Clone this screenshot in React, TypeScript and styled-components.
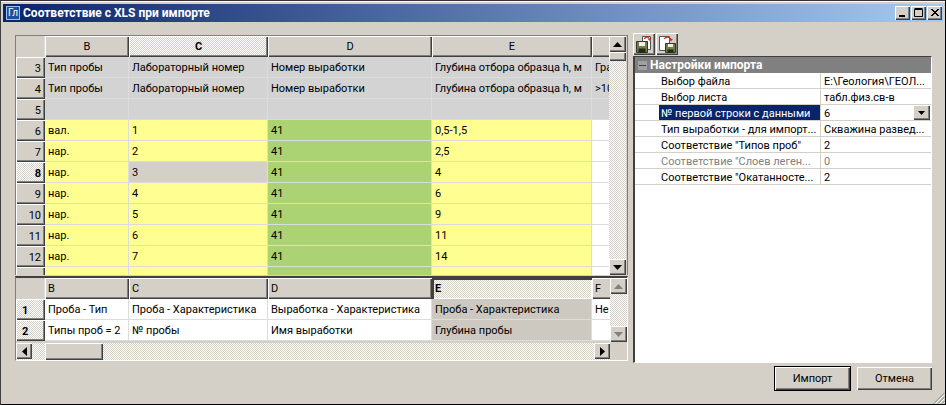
import { createGlobalStyle, styled } from 'styled-components';

const GlobalStyle = createGlobalStyle`
  html, body {
    margin: 0;
    padding: 0;
    background: #fff;
  }
  * {
    box-sizing: border-box;
  }
`;

const FACE = '#d4d0c8';
const DITHER = `repeating-conic-gradient(#ffffff 0 25%, ${FACE} 0 50%) 0 0 / 2px 2px`;
const RAISED = `inset 1px 1px 0 #fff, inset -1px -1px 0 #404040, inset -2px -2px 0 #808080`;

const topColumns = [
  { name: 'B', width: 84 },
  { name: 'C', width: 139, active: true },
  { name: 'D', width: 164 },
  { name: 'E', width: 160 },
  { name: '', width: 20 },
];

const topRows = [
  { n: '3', tone: 'head', cells: ['Тип пробы', 'Лабораторный номер', 'Номер выработки', 'Глубина отбора образца h, м', 'Гра'] },
  { n: '4', tone: 'head', cells: ['Тип пробы', 'Лабораторный номер', 'Номер выработки', 'Глубина отбора образца h, м', '>10'] },
  { n: '5', tone: 'head', cells: ['', '', '', '', ''] },
  { n: '6', tone: 'data', cells: ['вал.', '1', '41', '0,5-1,5', ''] },
  { n: '7', tone: 'data', cells: ['нар.', '2', '41', '2,5', ''] },
  { n: '8', tone: 'data', active: true, cells: ['нар.', '3', '41', '4', ''] },
  { n: '9', tone: 'data', cells: ['нар.', '4', '41', '6', ''] },
  { n: '10', tone: 'data', cells: ['нар.', '5', '41', '9', ''] },
  { n: '11', tone: 'data', cells: ['нар.', '6', '41', '11', ''] },
  { n: '12', tone: 'data', cells: ['нар.', '7', '41', '14', ''] },
  { n: '', tone: 'data', cells: ['', '', '', '', ''] },
];

const bottomRows = [
  { n: '1', cells: ['Проба - Тип', 'Проба - Характеристика', 'Выработка - Характеристика', 'Проба - Характеристика', 'Не'] },
  { n: '2', cells: ['Типы проб = 2', '№ пробы', 'Имя выработки', 'Глубина пробы', ''] },
];

const settings = [
  { label: 'Выбор файла', value: 'E:\\Геология\\ГЕОЛ...' },
  { label: 'Выбор листа', value: 'табл.физ.св-в' },
  { label: '№ первой строки с данными', value: '6', selected: true },
  { label: 'Тип выработки - для импорт...', value: 'Скважина развед...' },
  { label: 'Соответствие "Типов проб"', value: '2' },
  { label: 'Соответствие "Слоев леген...', value: '0', muted: true },
  { label: 'Соответствие "Окатанносте...', value: '2' },
];

function cellTone(tone: string, col: number, rowActive?: boolean) {
  if (tone === 'head') return '#d3d3d3';
  if (rowActive && col === 1) return FACE;
  if (col === 2) return '#acd373';
  if (col === 4) return '#ffffff';
  return '#ffff91';
}

export default function App() {
  return (
    <>
      <GlobalStyle />
      <Window>
        <TitleBar>
          <AppBadge>Гл</AppBadge>
          <TitleText>Соответствие с XLS при импорте</TitleText>
          <Caption>
            <CaptionButton aria-label="Свернуть">
              <svg width="10" height="10" viewBox="0 0 10 10"><rect x="1" y="7" width="6" height="2" fill="#000" /></svg>
            </CaptionButton>
            <CaptionButton aria-label="Развернуть">
              <svg width="10" height="10" viewBox="0 0 10 10"><path d="M0.500 1.500h8v7h-8z M0.500 0.500h8" fill="none" stroke="#000" /></svg>
            </CaptionButton>
            <CaptionButton aria-label="Закрыть">
              <svg width="10" height="10" viewBox="0 0 10 10"><path d="M1 1l7 7M2 1l7 7M8 1l-7 7M9 1l-7 7" stroke="#000" fill="none" /></svg>
            </CaptionButton>
          </Caption>
        </TitleBar>

        <Body>
          <LeftPane>
            <TopGrid>
              <GridArea>
                <Row>
                  <Corner />
                  {topColumns.map((c) => (
                    <ColumnHead key={c.name} $width={c.width} $active={c.active}>{c.name}</ColumnHead>
                  ))}
                </Row>
                {topRows.map((r, i) => (
                  <Row key={i}>
                    <RowHead $active={r.active}>{r.n}</RowHead>
                    {r.cells.map((text, col) => (
                      <Cell key={col} $width={topColumns[col].width} $bg={cellTone(r.tone, col, r.active)}>{text}</Cell>
                    ))}
                  </Row>
                ))}
              </GridArea>
              <VScroll>
                <ScrollButton><UpArrow /></ScrollButton>
                <VThumb />
                <ScrollTrack />
                <ScrollButton><DownArrow /></ScrollButton>
              </VScroll>
            </TopGrid>

            <BottomGrid>
              <GridRowStack>
                <GridArea>
                  <Row>
                    <Corner />
                    {['B', 'C', 'D', 'E', 'F'].map((name, i) => (
                      <LetterHead key={name} $width={topColumns[i].width} $active={name === 'E'}>{name}</LetterHead>
                    ))}
                  </Row>
                  {bottomRows.map((r) => (
                    <Row key={r.n}>
                      <BoldRowHead>{r.n}</BoldRowHead>
                      {r.cells.map((text, col) => (
                        <Cell key={col} $width={topColumns[col].width} $bg={col === 3 ? '#cdc9c1' : '#ffffff'}>{text}</Cell>
                      ))}
                    </Row>
                  ))}
                </GridArea>
                <HScroll>
                  <ScrollButton $wide><LeftArrow /></ScrollButton>
                  <HThumb />
                  <ScrollTrack />
                  <ScrollButton $wide><RightArrow /></ScrollButton>
                </HScroll>
              </GridRowStack>
              <DisabledScroll>
                <ScrollButton><UpArrow $muted /></ScrollButton>
                <ScrollTrack />
                <ScrollButton><DownArrow $muted /></ScrollButton>
              </DisabledScroll>
            </BottomGrid>
          </LeftPane>

          <RightPane>
            <Toolbar>
              <ToolButton aria-label="Загрузить настройки">
                <svg width="20" height="20" viewBox="0 0 20 20">
                  <path d="M8.500 2.500h8v13h-8z" fill="#fff" stroke="#555" />
                  <path d="M10 5c2-2.500 4-2.500 5.500-0.500" fill="none" stroke="#d03020" strokeWidth="1.200" />
                  <path d="M13.500 4.500h4l-2 2.500z" fill="#d03020" />
                  <path d="M2.500 7.500h11v11h-11z" fill="#6f7f45" stroke="#333" />
                  <path d="M5 8h6v4H5z" fill="#f0f0e8" />
                  <path d="M4.500 14.500h7v4h-7z" fill="#1f2a10" />
                </svg>
              </ToolButton>
              <ToolButton aria-label="Сохранить настройки">
                <svg width="20" height="20" viewBox="0 0 20 20">
                  <path d="M2.500 2.500h10v14h-10z" fill="#fff" stroke="#555" />
                  <path d="M7 5c2-2.500 5-2.500 7 0" fill="none" stroke="#d03020" strokeWidth="1.200" />
                  <path d="M12 5h4l-2 2.500z" fill="#d03020" />
                  <path d="M8.500 9.500h10v9h-10z" fill="#6f7f45" stroke="#333" />
                  <path d="M11 10h5v3h-5z" fill="#f0f0e8" />
                  <path d="M10.500 15.500h6v3h-6z" fill="#1f2a10" />
                </svg>
              </ToolButton>
            </Toolbar>
            <PropertyGrid>
              <GroupHeader>
                <Collapse>
                  <svg width="9" height="9" viewBox="0 0 9 9"><rect x="1" y="4" width="7" height="1" fill="#404040" /></svg>
                </Collapse>
                Настройки импорта
              </GroupHeader>
              {settings.map((s) => (
                <PropRow key={s.label}>
                  <PropGutter />
                  <PropLabel $selected={s.selected} $muted={s.muted}>{s.label}</PropLabel>
                  <PropValue $muted={s.muted}>
                    {s.value}
                    {s.selected && (
                      <ComboButton>
                        <svg width="7" height="4" viewBox="0 0 7 4"><path d="M0 0h7L3.500 4z" fill="#000" /></svg>
                      </ComboButton>
                    )}
                  </PropValue>
                </PropRow>
              ))}
            </PropertyGrid>
          </RightPane>
        </Body>

        <Footer>
          <DefaultButton>Импорт</DefaultButton>
          <PushButton>Отмена</PushButton>
          <Grip>
            <svg width="12" height="12" viewBox="0 0 12 12">
              <path d="M11.500 1L1 11.500M11.500 5L5 11.500M11.500 9L9 11.500" stroke="#808080" fill="none" />
              <path d="M11.500 2.500L2.500 11.500M11.500 6.500L6.500 11.500M11.500 10.500L10.500 11.500" stroke="#fff" fill="none" />
            </svg>
          </Grip>
        </Footer>
      </Window>
    </>
  );
}

const UpArrow = ({ $muted }: { $muted?: boolean }) => (
  <svg width="9" height="5" viewBox="0 0 9 5"><path d="M4.500 0L9 5H0z" fill={$muted ? '#808080' : '#000'} /></svg>
);
const DownArrow = ({ $muted }: { $muted?: boolean }) => (
  <svg width="9" height="5" viewBox="0 0 9 5"><path d="M0 0h9L4.500 5z" fill={$muted ? '#808080' : '#000'} /></svg>
);
const LeftArrow = () => (
  <svg width="5" height="9" viewBox="0 0 5 9"><path d="M5 0v9L0 4.500z" fill="#000" /></svg>
);
const RightArrow = () => (
  <svg width="5" height="9" viewBox="0 0 5 9"><path d="M0 0v9l5-4.500z" fill="#000" /></svg>
);

const Window = styled.div`
  position: relative;
  width: 946px;
  height: 405px;
  display: flex;
  flex-direction: column;
  background: ${FACE};
  border: 1px solid #000;
  border-top-color: #333;
  border-left-color: #404040;
  box-shadow: inset 0 1px 0 #fff;
  padding: 3px 0 0 0;
  font-family: Roboto, 'Liberation Sans', sans-serif;
  font-size: 11px;
  color: #000;
  overflow: hidden;
`;

const TitleBar = styled.div`
  height: 18px;
  margin: 0 2px;
  flex: none;
  display: flex;
  align-items: center;
  background: linear-gradient(90deg, #0a246a 0%, #a6caf0 100%);
  padding: 0 1px 0 3px;
`;

const AppBadge = styled.div`
  width: 14px;
  height: 14px;
  background: #1c4f9c;
  border: 1px solid #9cc0ea;
  color: #fff;
  font-size: 10px;
  line-height: 12px;
  text-align: center;
  margin-right: 3px;
`;

const TitleText = styled.div`
  color: #fff;
  font-weight: 700;
  font-size: 12px;
`;

const Caption = styled.div`
  margin-left: auto;
  display: flex;
  gap: 1px;
`;

const CaptionButton = styled.div`
  width: 15px;
  height: 14px;
  background: ${FACE};
  box-shadow: ${RAISED};
  display: flex;
  align-items: center;
  justify-content: center;
`;

const Body = styled.div`
  display: flex;
  padding: 13px 12px 0 14px;
  height: 341px;
  flex: none;
`;

const LeftPane = styled.div`
  width: 613px;
  flex: none;
  display: flex;
  flex-direction: column;
  gap: 1px;
`;

const TopGrid = styled.div`
  height: 240px;
  display: flex;
  border: 1px solid #808080;
  border-bottom: none;
  padding-right: 1px;
  background: ${FACE};
  flex: none;
`;

const BottomGrid = styled.div`
  height: 85px;
  display: flex;
  border-top: 2px solid #404040;
  border-left: 1px solid #808080;
  border-right: 1px solid #fff;
  border-bottom: 1px solid #fff;
  flex: none;
`;

const GridRowStack = styled.div`
  width: 594px;
  display: flex;
  flex-direction: column;
`;

const GridArea = styled.div`
  width: 594px;
  flex: 1;
  min-height: 0;
  overflow: hidden;
`;

const Row = styled.div`
  display: flex;
  height: 21px;
`;

const Corner = styled.div`
  width: 29px;
  flex: none;
  background: ${FACE};
  border-right: 1px solid #dcdcdc;
`;

const ColumnHead = styled.div<{ $width: number; $active?: boolean }>`
  width: ${(p) => p.$width}px;
  flex: none;
  display: flex;
  align-items: center;
  justify-content: center;
  font-weight: ${(p) => (p.$active ? 700 : 400)};
  background: ${(p) => (p.$active ? DITHER : FACE)};
  box-shadow: inset 1px 1px 0 #fff, inset -1px -1px 0 #404040, inset -2px -2px 0 #808080;
`;

const LetterHead = styled(ColumnHead)`
  justify-content: flex-start;
  padding-left: 3px;
  box-shadow: ${(p) =>
    p.$active
      ? 'inset 2px 2px 0 #404040, inset -1px -1px 0 #fff'
      : 'inset 1px 1px 0 #fff, inset -1px -1px 0 #404040, inset -2px -2px 0 #808080'};
`;

const RowHead = styled.div<{ $active?: boolean }>`
  width: 29px;
  flex: none;
  display: flex;
  align-items: center;
  justify-content: flex-end;
  padding: 1px 4px 0 0;
  font-weight: ${(p) => (p.$active ? 700 : 400)};
  background: ${(p) => (p.$active ? DITHER : FACE)};
  box-shadow: ${RAISED};
`;

const BoldRowHead = styled.div`
  width: 29px;
  flex: none;
  display: flex;
  align-items: center;
  padding: 1px 0 0 6px;
  font-weight: 700;
  background: ${DITHER};
  box-shadow: ${RAISED};
`;

const Cell = styled.div<{ $width: number; $bg: string }>`
  width: ${(p) => p.$width}px;
  flex: none;
  display: flex;
  align-items: center;
  padding: 1px 0 0 3px;
  white-space: nowrap;
  overflow: hidden;
  background: ${(p) => p.$bg};
  border-right: 1px solid #dcdcdc;
  border-bottom: 1px solid #dcdcdc;
`;

const VScroll = styled.div`
  width: 17px;
  flex: none;
  display: flex;
  flex-direction: column;
`;

const DisabledScroll = styled(VScroll)`
  height: 64px;
`;

const ScrollButton = styled.div<{ $wide?: boolean }>`
  width: ${(p) => (p.$wide ? '16px' : '17px')};
  height: 16px;
  flex: none;
  background: ${FACE};
  box-shadow: ${RAISED};
  display: flex;
  align-items: center;
  justify-content: center;
`;

const VThumb = styled.div`
  height: 9px;
  flex: none;
  background: ${FACE};
  box-shadow: ${RAISED};
`;

const ScrollTrack = styled.div`
  flex: 1;
  background: ${DITHER};
`;

const HScroll = styled.div`
  height: 17px;
  flex: none;
  display: flex;
  background: ${DITHER};
`;

const HThumb = styled.div`
  width: 58px;
  flex: none;
  margin-left: 13px;
  background: ${FACE};
  box-shadow: ${RAISED};
`;

const RightPane = styled.div`
  width: 299px;
  margin-left: 5px;
  margin-top: -2px;
  display: flex;
  flex-direction: column;
`;

const Toolbar = styled.div`
  display: flex;
  gap: 1px;
  height: 23px;
  flex: none;
`;

const ToolButton = styled.div`
  width: 22px;
  height: 22px;
  background: ${FACE};
  box-shadow: ${RAISED};
  display: flex;
  align-items: center;
  justify-content: center;
`;

const PropertyGrid = styled.div`
  flex: 1;
  background: #fff;
  border-top: 1px solid #404040;
  border-left: 2px solid #404040;
  border-right: 1px solid #fff;
  border-bottom: 1px solid #fff;
`;

const GroupHeader = styled.div`
  height: 16px;
  background: #808080;
  color: #fff;
  font-weight: 700;
  font-size: 12px;
  display: flex;
  align-items: center;
  padding-left: 3px;
`;

const Collapse = styled.div`
  width: 9px;
  height: 9px;
  background: #a0a0a0;
  margin-right: 3px;
  display: flex;
  align-items: center;
  justify-content: center;
`;

const PropRow = styled.div`
  height: 16px;
  display: flex;
  align-items: stretch;
  border-bottom: 1px solid #d4d0c8;
`;

const PropGutter = styled.div`
  width: 24px;
  flex: none;
`;

const PropLabel = styled.div<{ $selected?: boolean; $muted?: boolean }>`
  width: 162px;
  flex: none;
  padding: 1px 0 0 2px;
  white-space: nowrap;
  overflow: hidden;
  line-height: 15px;
  background: ${(p) => (p.$selected ? '#0a246a' : 'transparent')};
  color: ${(p) => (p.$selected ? '#fff' : p.$muted ? '#808080' : '#000')};
  border-right: 1px solid #d4d0c8;
`;

const PropValue = styled.div<{ $muted?: boolean }>`
  flex: 1;
  display: flex;
  justify-content: space-between;
  padding: 1px 0 0 3px;
  white-space: nowrap;
  overflow: hidden;
  line-height: 15px;
  color: ${(p) => (p.$muted ? '#808080' : '#000')};
`;

const ComboButton = styled.div`
  width: 17px;
  height: 15px;
  margin: -1px 1px 0 0;
  background: ${FACE};
  box-shadow: ${RAISED};
  display: flex;
  align-items: center;
  justify-content: center;
`;

const Footer = styled.div`
  flex: 1;
  display: flex;
  justify-content: flex-end;
  align-items: flex-start;
  gap: 6px;
  padding: 3px 13px 0 0;
`;

const PushButton = styled.div`
  width: 75px;
  height: 23px;
  margin-top: 1px;
  background: ${FACE};
  box-shadow: ${RAISED};
  display: flex;
  align-items: center;
  justify-content: center;
`;

const DefaultButton = styled(PushButton)`
  width: 77px;
  height: 25px;
  margin-top: 0;
  border: 1px solid #000;
`;

const Grip = styled.div`
  position: absolute;
  right: 0;
  bottom: 0;
  width: 12px;
  height: 12px;
`;
